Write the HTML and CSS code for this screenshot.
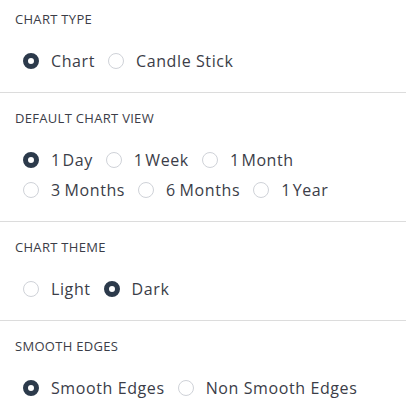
FILE: index.html
```html
<!DOCTYPE html>
<html>
<head>
<meta charset="utf-8">
<link rel="stylesheet" href="styles.css">
</head>
<body>
<div class="panel">
  <section class="group first">
    <h3 class="title">CHART TYPE</h3>
    <div class="options">
      <label class="opt"><span class="radio on"></span><span class="txt">Chart</span></label>
      <label class="opt"><span class="radio"></span><span class="txt">Candle Stick</span></label>
    </div>
  </section>
  <section class="group">
    <h3 class="title">DEFAULT CHART VIEW</h3>
    <div class="options">
      <label class="opt"><span class="radio on"></span><span class="txt one">1 Day</span></label>
      <label class="opt"><span class="radio"></span><span class="txt one">1 Week</span></label>
      <label class="opt"><span class="radio"></span><span class="txt one">1 Month</span></label>
    </div>
    <div class="options">
      <label class="opt"><span class="radio"></span><span class="txt num">3 Months</span></label>
      <label class="opt"><span class="radio"></span><span class="txt num">6 Months</span></label>
      <label class="opt"><span class="radio"></span><span class="txt one">1 Year</span></label>
    </div>
  </section>
  <section class="group">
    <h3 class="title">CHART THEME</h3>
    <div class="options">
      <label class="opt"><span class="radio"></span><span class="txt">Light</span></label>
      <label class="opt"><span class="radio on"></span><span class="txt">Dark</span></label>
    </div>
  </section>
  <section class="group last">
    <h3 class="title">SMOOTH EDGES</h3>
    <div class="options">
      <label class="opt"><span class="radio on"></span><span class="txt">Smooth Edges</span></label>
      <label class="opt"><span class="radio"></span><span class="txt">Non Smooth Edges</span></label>
    </div>
  </section>
</div>
</body>
</html>
```
FILE: styles.css
```css
html, body {
  margin: 0;
  padding: 0;
  background: #ffffff;
}
.panel {
  width: 406px;
  font-family: "Open Sans", "Noto Sans", sans-serif;
  color: #3b3d48;
}
.group {
  border-bottom: 1px solid #dcdcdc;
  padding: 17px 0 16px 15px;
}
.group.first {
  padding-top: 11px;
}
.group.last {
  border-bottom: none;
}
.title {
  margin: 0 0 19px 0;
  font-size: 13px;
  font-weight: 400;
  line-height: 16px;
  letter-spacing: 0.3px;
  color: #3b3d48;
}
.options {
  display: flex;
  gap: 13px;
  padding-left: 8px;
  height: 30px;
  align-items: center;
}
.opt {
  display: flex;
  align-items: center;
  gap: 12px;
  font-size: 16px;
  letter-spacing: 0.6px;
}
.radio {
  box-sizing: border-box;
  flex: none;
  width: 16px;
  height: 16px;
  border-radius: 50%;
  border: 1px solid #cfd2d8;
  background: #fff;
}
.radio.on {
  border: 5px solid #2c3a4b;
}
.txt {
  line-height: 20px;
}
.txt.one {
  word-spacing: -3px;
}
.txt.num {
  word-spacing: -1px;
}
```
